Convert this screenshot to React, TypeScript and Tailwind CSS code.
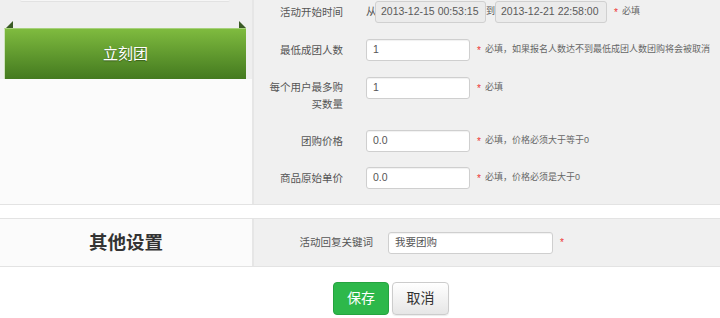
import React from "react";

const FONT = { fontFamily: '"Liberation Sans", Arial, "Noto Sans CJK SC", sans-serif' };

function Req({ text }: { text?: string }) {
  return (
    <div className="flex items-center ml-[7px] text-[9px] text-[#666] whitespace-nowrap">
      <span className="text-[#e33] mr-[4px] text-[10px]">*</span>
      {text && <span>{text}</span>}
    </div>
  );
}

function TextInput({ value, w = "w-[104px]" }: { value: string; w?: string }) {
  return (
    <div
      className={`${w} h-[22px] shrink-0 bg-white border border-[#cfcfcf] rounded-[3px] flex items-center pl-[6px] text-[10.5px] text-[#555] shadow-[inset_0_1px_1px_rgba(0,0,0,0.06)]`}
    >
      {value}
    </div>
  );
}

function DateInput({ value, w }: { value: string; w: string }) {
  return (
    <div
      className={`${w} h-[22px] shrink-0 bg-[#ebebeb] border border-[#d0d0d0] rounded-[3px] flex items-center pl-[5px] text-[10.5px] text-[#5a5a5a]`}
    >
      {value}
    </div>
  );
}

function Label({ children }: { children: React.ReactNode }) {
  return (
    <div className="w-[80px] shrink-0 text-right text-[10.5px] leading-[17px] text-[#555] mr-[23px]">
      {children}
    </div>
  );
}

export default function App() {
  return (
    <div className="w-[720px] h-[318px] bg-white overflow-hidden" style={FONT}>
      {/* Section 1 */}
      <div className="flex h-[205px] border-b border-[#e3e3e3]">
        <div className="w-[254px] shrink-0 bg-[#fbfbfb] border-r-2 border-[#e6e6e6]">
          <div className="h-[79px] bg-[#efefef] pl-[4px] pr-[6px] flex flex-col">
            <div className="mx-[16px] h-[2px] bg-[#f6f6f6] border-b border-[#e2e2e2] rounded-b-[3px]" />
            <div className="relative mt-[26px] h-[51px]">
              <div className="absolute left-[2px] top-[-7px] w-0 h-0 border-l-[7px] border-l-transparent border-b-[7px] border-b-[#3a5a26]" />
              <div className="absolute right-[0px] top-[-7px] w-0 h-0 border-r-[7px] border-r-transparent border-b-[7px] border-b-[#3a5a26]" />
              <div className="h-full border-l border-[#cfe3bd] border-t border-t-[#a6d17a] bg-gradient-to-b from-[#7fbb3f] to-[#447a1f] flex items-center justify-center">
                <span className="text-white text-[15px] [text-shadow:0_1px_1px_rgba(0,0,0,0.35)]">立刻团</span>
              </div>
            </div>
          </div>
        </div>
        <div className="flex-1 bg-[#f0f0f0] pl-[9px] flex flex-col">
          {/* Row 1 */}
          <div className="flex items-center mt-[1px] h-[22px]">
            <Label>活动开始时间</Label>
            <span className="text-[10.5px] text-[#555] w-[9px]">从</span>
            <DateInput value="2013-12-15 00:53:15" w="w-[111px]" />
            <span className="text-[9px] text-[#555] w-[9px] text-center">到</span>
            <DateInput value="2013-12-21 22:58:00" w="w-[112px]" />
            <Req text="必填" />
          </div>
          {/* Row 2 */}
          <div className="flex items-center mt-[16px] h-[22px]">
            <Label>最低成团人数</Label>
            <TextInput value="1" />
            <Req text="必填，如果报名人数达不到最低成团人数团购将会被取消" />
          </div>
          {/* Row 3 */}
          <div className="flex items-start mt-[16px] h-[36px]">
            <div className="pt-[2px]">
              <Label>
                每个用户最多购
                <br />
                买数量
              </Label>
            </div>
            <div className="flex items-center h-[22px]">
              <TextInput value="1" />
              <Req text="必填" />
            </div>
          </div>
          {/* Row 4 */}
          <div className="flex items-center mt-[17px] h-[22px]">
            <Label>团购价格</Label>
            <TextInput value="0.0" />
            <Req text="必填，价格必须大于等于0" />
          </div>
          {/* Row 5 */}
          <div className="flex items-center mt-[15px] h-[22px]">
            <Label>商品原始单价</Label>
            <TextInput value="0.0" />
            <Req text="必填，价格必须是大于0" />
          </div>
        </div>
      </div>

      {/* gap */}
      <div className="h-[13px]" />

      {/* Section 2 */}
      <div className="flex h-[49px] border-y border-[#e3e3e3]">
        <div className="w-[254px] shrink-0 bg-[#fbfbfb] border-r-2 border-[#e6e6e6] flex items-center justify-center">
          <span className="text-[18.5px] font-bold text-[#333]">其他设置</span>
        </div>
        <div className="flex-1 bg-[#f0f0f0] pl-[9px] flex items-center">
          <div className="w-[110px] shrink-0 text-right text-[10.5px] text-[#555] mr-[15px]">活动回复关键词</div>
          <TextInput value="我要团购" w="w-[165px]" />
          <Req />
        </div>
      </div>

      {/* Buttons */}
      <div className="flex mt-[15px] pl-[333px] gap-[3px]">
        <button className="w-[56px] h-[33px] rounded-[4px] bg-[#2db84a] border border-[#25a33f] text-white text-[14px] flex items-center justify-center">
          保存
        </button>
        <button className="w-[57px] h-[33px] rounded-[4px] bg-gradient-to-b from-white to-[#e6e6e6] border border-[#cccccc] text-[#333] text-[14px] flex items-center justify-center shadow-[0_1px_1px_rgba(0,0,0,0.08)]">
          取消
        </button>
      </div>
    </div>
  );
}
